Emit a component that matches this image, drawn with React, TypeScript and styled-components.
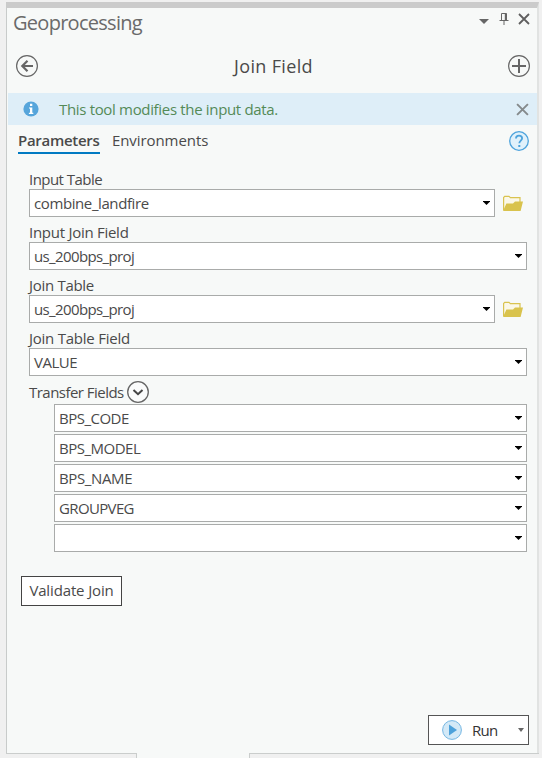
import React from 'react';
import styled, { createGlobalStyle } from 'styled-components';

const GlobalStyle = createGlobalStyle`
  *, *::before, *::after { box-sizing: border-box; }
  body { margin: 0; background: #f0f0f0; overflow: hidden; }
  button { appearance: none; border: 0; padding: 0; margin: 0; background: none; font: inherit; color: inherit; }
  svg { display: block; flex: none; }
`;

const Page = styled.div`
  width: 542px;
  height: 758px;
  padding: 2px 3px 0 6px;
  display: flex;
  flex-direction: column;
  background: #f0f0f0;
  color: #4a4a4a;
  font: 15px/20px 'Open Sans', 'Noto Sans', sans-serif;
`;

const Panel = styled.main`
  height: 751px;
  flex: none;
  display: flex;
  flex-direction: column;
  background: #f7f9f8;
  border-left: 1px solid #c8cbca;
  border-right: 2px solid #e1e3e2;
  border-top: 6px solid #cbcbcb;
`;

const Label = styled.span<{ $track?: number }>`
  white-space: pre;
  letter-spacing: ${({ $track = 0 }) => $track}px;
`;

const TitleBar = styled.header`
  height: 36px;
  flex: none;
  display: flex;
  justify-content: space-between;
  padding: 0 7px 0 6px;
`;

const Title = styled.h1`
  margin: 1px 0 0;
  font-size: 20px;
  line-height: 28px;
  font-weight: 400;
  color: #6a6a6a;
`;

const WindowTools = styled.div`
  display: flex;
  gap: 10px;
  padding-top: 4px;
`;

const ToolHeader = styled.div`
  height: 49px;
  flex: none;
  display: grid;
  grid-template-columns: 24px 1fr 24px;
  align-items: start;
  padding: 10px 6px 0 8px;
`;

const ToolName = styled.h2`
  margin: -1px 0 0 1px;
  text-align: center;
  font-size: 18px;
  line-height: 26px;
  font-weight: 400;
`;

const Banner = styled.div`
  height: 32px;
  flex: none;
  display: flex;
  align-items: center;
  margin-left: 1px;
  padding: 0 8px 0 15px;
  background: #deeef8;
  color: #548a57;
`;

const BannerText = styled.span`
  flex: 1;
  margin-left: 20px;
  padding-bottom: 1px;
`;

const Tabs = styled.nav`
  height: 44px;
  flex: none;
  display: flex;
  align-items: flex-start;
  padding: 5px 8px 0 11px;
`;

const Tab = styled.button<{ $active?: boolean }>`
  height: 24px;
  margin-right: 12px;
  font-weight: ${({ $active }) => ($active ? 600 : 400)};
  border-bottom: 2px solid ${({ $active }) => ($active ? '#007ac2' : 'transparent')};
  ${({ $active }) => $active && 'width: 82px;'}
  text-align: left;
  line-height: 20px;
  padding-bottom: 4px;
`;

const HelpButton = styled.button`
  margin-left: auto;
`;

const Form = styled.section`
  flex: 1;
  padding: 0 10px 0 22px;
`;

const Field = styled.div`
  height: 53px;
`;

const FieldLabel = styled.div`
  height: 20px;
  line-height: 20px;
`;

const FieldRow = styled.div`
  display: flex;
  align-items: center;
  gap: 7px;
`;

const Combo = styled.div`
  flex: 1;
  height: 28px;
  display: flex;
  align-items: center;
  justify-content: space-between;
  padding: 0 4px 1px;
  background: #fff;
  border: 1px solid #a9abaa;
`;

const BrowseButton = styled.button`
  width: 25px;
  height: 20px;
`;

const TransferHeader = styled.div`
  height: 22px;
  display: flex;
  align-items: center;
  gap: 3px;
`;

const TransferList = styled.div`
  display: flex;
  flex-direction: column;
  gap: 2px;
  padding: 0 0 0 25px;
  margin-top: 1px;

  ${Combo} { flex: none; }
`;

const ValidateButton = styled.button`
  width: 101px;
  height: 30px;
  margin: 24px 0 0 -8px;
  padding-bottom: 2px;
  background: #fff;
  border: 1px solid #444;
`;

const Footer = styled.footer`
  height: 38px;
  flex: none;
  display: flex;
  justify-content: flex-end;
  padding-right: 8px;
`;

const RunButton = styled.button`
  width: 101px;
  height: 30px;
  display: flex;
  align-items: center;
  padding: 0 4px 0 13px;
  background: #fff;
  border: 1px solid #555;
  color: #333;
`;

const RunText = styled.span`
  flex: 1;
  margin-left: 10px;
  text-align: left;
`;

const DockEdge = styled.div`
  height: 5px;
  display: grid;
  grid-template-columns: 131px 112px 1fr;
`;

const DockTab = styled.div<{ $open?: boolean }>`
  background: ${({ $open }) => ($open ? '#f7f9f8' : '#f0f0f0')};
  border-top: 1px solid ${({ $open }) => ($open ? '#f7f9f8' : '#cacdcc')};
  &:first-child { border-right: 1px solid #cacdcc; }
  &:last-child { border-left: 1px solid #cacdcc; }
`;

const CloseIcon = ({ color, size = 12 }: { color: string; size?: number }) => (
  <svg width={size} height={size} viewBox="0 0 12 12" fill="none" stroke={color} strokeWidth="1.8">
    <path d="M1 1 11 11M11 1 1 11" />
  </svg>
);

const MenuIcon = () => (
  <svg width="10" height="18" viewBox="0 0 10 18"><path d="M0 7H10L5 12Z" fill="#666" /></svg>
);

const PinIcon = () => (
  <svg width="10" height="14" viewBox="0 0 10 14" fill="none" stroke="#666">
    <path d="M2.5 8V1.5H7.5V8M.5 8.5H9.5M5 9V13" />
    <path d="M6.5 1V8" strokeWidth="1.4" />
  </svg>
);

const WindowClose = styled.button`
  height: 12px;
  margin: 1px 0 0 -1px;
`;

const BackIcon = () => (
  <svg width="24" height="24" viewBox="0 0 24 24" fill="none" stroke="#666">
    <circle cx="12" cy="12" r="10.4" strokeWidth="1.2" />
    <path d="M18 12H7.5M12.5 6.8 7.3 12l5.2 5.2" strokeWidth="2.2" />
  </svg>
);

const PlusIcon = () => (
  <svg width="24" height="24" viewBox="0 0 24 24" fill="none" stroke="#666">
    <circle cx="12" cy="12" r="10.4" strokeWidth="1.2" />
    <path d="M12 5V19M5 12H19" strokeWidth="2" />
  </svg>
);

const InfoIcon = () => (
  <svg width="16" height="16" viewBox="0 0 16 16">
    <circle cx="8" cy="8" r="7.6" fill="#56a5db" />
    <path d="M7 2.8H9.3V5H7ZM6 6.4H9.3V11.7H10.3V13H5.9V11.7H7V7.6H6Z" fill="#fff" />
  </svg>
);

const HelpIcon = () => (
  <svg width="20" height="22" viewBox="0 0 20 22" fill="none" stroke="#4da3dc">
    <circle cx="10" cy="11" r="9.3" fill="#e0f1fb" strokeWidth="1.3" />
    <path d="M7 8.5C7 6.6 8.2 5.7 10 5.7s3.1 1 3.1 2.6c0 2.1-2.8 2.5-2.8 5" strokeWidth="1.8" />
    <path d="M10.3 15V17" strokeWidth="2" />
  </svg>
);

const FolderIcon = () => (
  <svg width="22" height="18" viewBox="0 0 22 18">
    <path d="M1.6 16V3.5L2.7 2.4H7L8.4 3.6H18V8" fill="#fbf8e8" stroke="#d9c350" strokeWidth="1.2" />
    <path d="M1 17 4.4 9.5H11L13 7.5H21L18.6 17Z" fill="#d9c34d" />
  </svg>
);

const DropArrow = () => (
  <svg width="7" height="4" viewBox="0 0 7 4"><path d="M0 0H7V.6L3.5 4 0 .6Z" fill="#000" /></svg>
);

const ExpandIcon = () => (
  <svg width="22" height="22" viewBox="0 0 22 22" fill="none" stroke="#666">
    <circle cx="11" cy="11" r="10.3" strokeWidth="1.3" fill="#fafbfb" />
    <path d="M6.5 9 11 13.2 15.5 9" stroke="#444" strokeWidth="2" />
  </svg>
);

const PlayIcon = () => (
  <svg width="20" height="20" viewBox="0 0 20 20">
    <circle cx="10" cy="10" r="9.4" fill="#d3e9f7" stroke="#75b6e2" />
    <path d="M7 4.5 15 10 7 15.5Z" fill="#4da1da" />
  </svg>
);

const RunMenuIcon = () => (
  <svg width="6" height="4" viewBox="0 0 6 4"><path d="M0 0H6L3 4Z" fill="#666" /></svg>
);

type Entry = { text: string; track: number };

const fields: { label: Entry; value: Entry; browse?: boolean }[] = [
  { label: { text: 'Input Table', track: -0.54 }, value: { text: 'combine_landfire', track: -0.4 }, browse: true },
  { label: { text: 'Input Join Field', track: -0.27 }, value: { text: 'us_200bps_proj', track: -0.62 } },
  { label: { text: 'Join Table', track: -0.3 }, value: { text: 'us_200bps_proj', track: -0.62 }, browse: true },
  { label: { text: 'Join Table Field', track: -0.24 }, value: { text: 'VALUE', track: -0.5 } },
];

const transferFields: Entry[] = [
  { text: 'BPS_CODE', track: -0.5 },
  { text: 'BPS_MODEL', track: -0.5 },
  { text: 'BPS_NAME', track: -0.37 },
  { text: 'GROUPVEG', track: -0.64 },
  { text: '', track: 0 },
];

const ComboBox = ({ text, track }: Entry) => (
  <Combo>
    <Label $track={track}>{text}</Label>
    <DropArrow />
  </Combo>
);

export default function App() {
  return (
    <>
      <GlobalStyle />
      <Page>
        <Panel>
          <TitleBar>
            <Title><Label $track={-0.72}>Geoprocessing</Label></Title>
            <WindowTools>
              <MenuIcon />
              <PinIcon />
              <WindowClose aria-label="Close"><CloseIcon color="#5f5f5f" /></WindowClose>
            </WindowTools>
          </TitleBar>
          <ToolHeader>
            <button aria-label="Back"><BackIcon /></button>
            <ToolName><Label $track={0.35}>Join Field</Label></ToolName>
            <button aria-label="Add"><PlusIcon /></button>
          </ToolHeader>
          <Banner>
            <InfoIcon />
            <BannerText><Label $track={-0.33}>This tool modifies the input data.</Label></BannerText>
            <CloseIcon color="#858a8c" size={13} />
          </Banner>
          <Tabs>
            <Tab $active><Label $track={-0.3}>Parameters</Label></Tab>
            <Tab><Label $track={-0.08}>Environments</Label></Tab>
            <HelpButton aria-label="Help"><HelpIcon /></HelpButton>
          </Tabs>
          <Form>
            {fields.map(({ label, value, browse }) => (
              <Field key={label.text}>
                <FieldLabel><Label $track={label.track}>{label.text}</Label></FieldLabel>
                <FieldRow>
                  <ComboBox {...value} />
                  {browse && <BrowseButton aria-label="Browse"><FolderIcon /></BrowseButton>}
                </FieldRow>
              </Field>
            ))}
            <TransferHeader>
              <Label $track={-0.53}>Transfer Fields</Label>
              <ExpandIcon />
            </TransferHeader>
            <TransferList>
              {transferFields.map((f) => <ComboBox key={f.text} {...f} />)}
            </TransferList>
            <ValidateButton><Label $track={-0.14}>Validate Join</Label></ValidateButton>
          </Form>
          <Footer>
            <RunButton>
              <PlayIcon />
              <RunText><Label $track={-0.7}>Run</Label></RunText>
              <RunMenuIcon />
            </RunButton>
          </Footer>
        </Panel>
        <DockEdge>
          <DockTab />
          <DockTab $open />
          <DockTab />
        </DockEdge>
      </Page>
    </>
  );
}
